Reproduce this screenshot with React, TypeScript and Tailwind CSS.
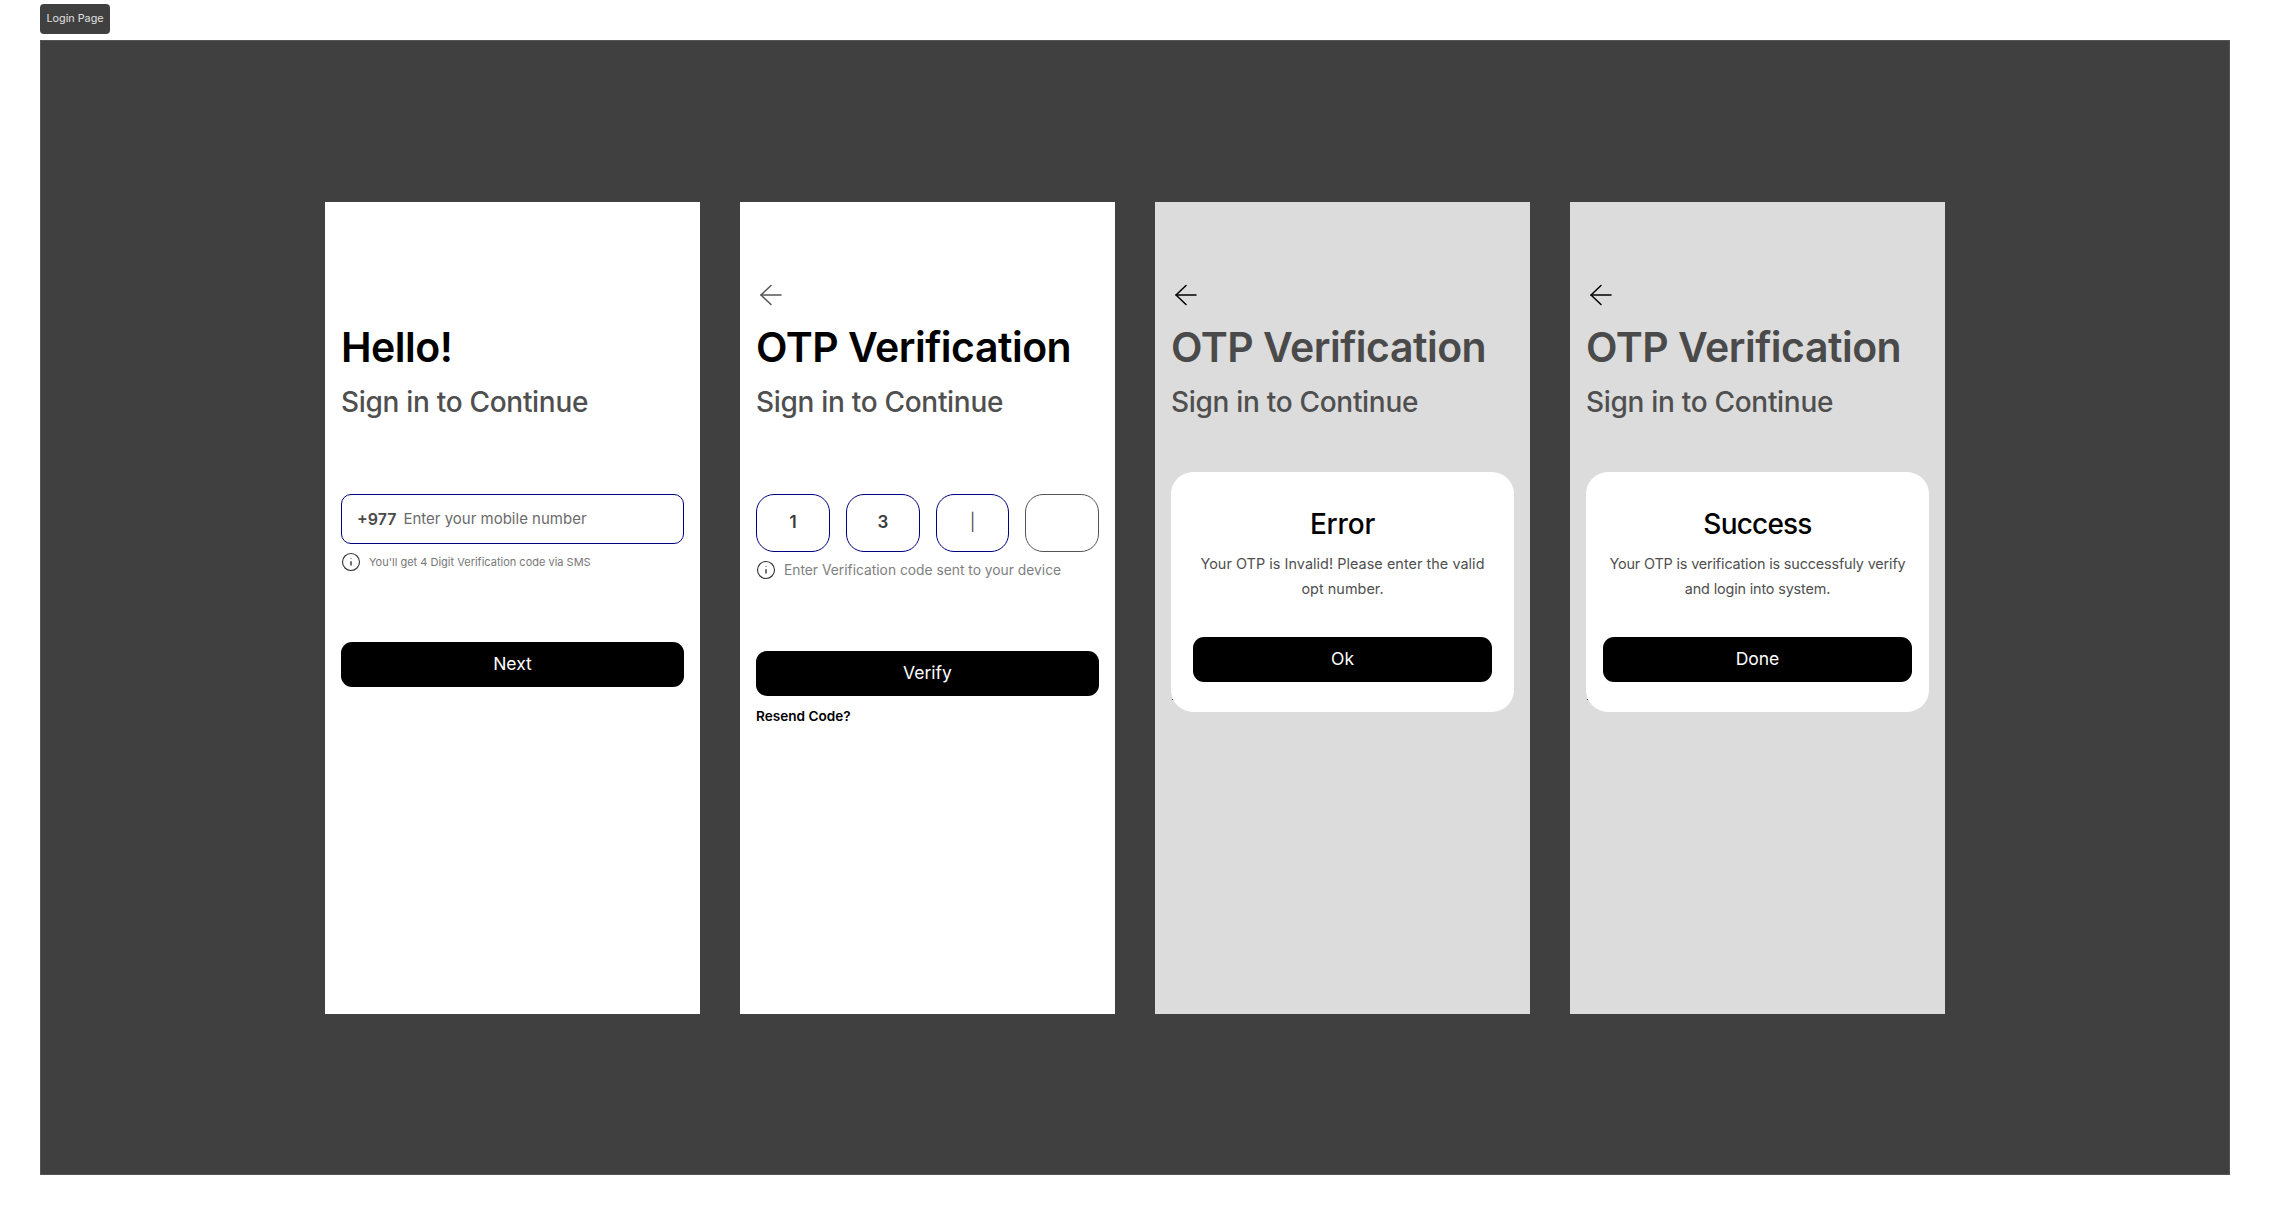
const font = "font-['Inter',sans-serif]";

function Arrow({ className }: { className: string }) {
  return (
    <svg width="24" height="24" viewBox="0 0 24 24" fill="none" stroke="currentColor" strokeWidth="1.5" strokeLinecap="round" strokeLinejoin="round" className={className}>
      <path d="M23 12H3" />
      <path d="M13 2.5L3 12l10 9.5" />
    </svg>
  );
}

function Info() {
  return (
    <svg width="20" height="20" viewBox="0 0 20 20" fill="none" stroke="#333333" className="shrink-0">
      <circle cx="10" cy="10" r="8.5" strokeWidth="1.1" />
      <path d="M10 9.2v4.2" strokeWidth="1.4" />
      <path d="M10 6.3v.5" strokeWidth="1.6" />
    </svg>
  );
}

function Button({ label }: { label: string }) {
  return (
    <button className="h-[45px] w-full rounded-[11px] bg-black text-[17.5px] font-normal text-white">
      {label}
    </button>
  );
}

function Header({ title, titleColor, arrowColor, showArrow = true }: { title: string; titleColor: string; arrowColor: string; showArrow?: boolean }) {
  return (
    <div className="flex flex-col">
      <div className="h-[24px]">{showArrow && <Arrow className={`ml-[2px] ${arrowColor}`} />}</div>
      <h1 className={`mt-[15px] h-[50px] text-[41px] leading-[50px] font-semibold tracking-[-0.5px] whitespace-nowrap ${titleColor}`}>{title}</h1>
      <p className="mt-[11px] h-[38px] text-[28px] leading-[38px] font-medium tracking-[-0.3px] text-[#4f4f4f] whitespace-nowrap">Sign in to Continue</p>
    </div>
  );
}

function OtpBox({ value, active, w = "w-[74px]", thin = false }: { value?: string; active: boolean; w?: string; thin?: boolean }) {
  return (
    <div className={`flex h-[58px] ${w} items-center justify-center rounded-[18px] border text-[17px] ${thin ? "font-normal text-[#555555]" : "font-semibold text-[#3a3a3a]"} ${active ? "border-[#000080]" : "border-[#555555]"}`}>
      {value}
    </div>
  );
}

function Modal({ title, lines, action, px, titleTracking, bodyTracking }: { title: string; lines: string[]; action: string; px: string; titleTracking: string; bodyTracking: string }) {
  return (
    <div className={`relative mt-[51px] flex h-[240px] flex-col items-center rounded-[22px] bg-white pt-[35px] ${px}`}>
      <h2 className={`h-[34px] text-[28px] leading-[34px] font-medium text-black ${titleTracking}`}>{title}</h2>
      <p className={`mt-[10px] text-center text-[14.4px] leading-[25px] text-[#4f4f4f] whitespace-nowrap ${bodyTracking}`}>
        {lines[0]}
        <br />
        {lines[1]}
      </p>
      <div className="mt-[36px] w-full">
        <Button label={action} />
      </div>
      <span className="absolute bottom-[12px] left-[1px] h-px w-px bg-[#444444]" />
    </div>
  );
}

export default function App() {
  return (
    <div className={`min-h-[1215px] bg-white pt-[4px] pl-[40px] ${font}`}>
      <div className="flex h-[30px] w-[70px] items-center justify-center rounded-[4px] bg-[#404040] text-[10.8px] text-[#e0e0e0]">Login Page</div>
      <div className="mt-[6px] flex h-[1135px] w-[2190px] gap-[40px] border border-[#555555] bg-[#404040] pt-[161px] pl-[284px]">
        <section className="h-[812px] w-[375px] bg-white px-[16px] pt-[81px]">
          <Header title="Hello!" titleColor="text-black" arrowColor="text-black" showArrow={false} />
          <div className="mt-[73px] flex h-[50px] items-center rounded-[10px] border border-[#000080] px-[15px] text-[15px] text-[#6b6b6b]">
            <span className="mr-[7px] text-[16px] font-semibold text-[#4a4a4a]">+977</span>
            Enter your mobile number
          </div>
          <div className="mt-[8px] flex items-center gap-[8px] text-[11px] text-[#777777]">
            <Info />
            You'll get 4 Digit Verification code via SMS
          </div>
          <div className="mt-[70px]">
            <Button label="Next" />
          </div>
        </section>

        <section className="h-[812px] w-[375px] bg-white px-[16px] pt-[81px]">
          <Header title="OTP Verification" titleColor="text-black" arrowColor="text-[#555555]" />
          <div className="mt-[73px] flex justify-between">
            <OtpBox value="1" active />
            <OtpBox value="3" active />
            <OtpBox value="|" active w="w-[73px]" thin />
            <OtpBox active={false} />
          </div>
          <div className="mt-[8px] flex items-center gap-[8px] text-[13.8px] text-[#808080]">
            <Info />
            Enter Verification code sent to your device
          </div>
          <div className="mt-[70px]">
            <Button label="Verify" />
          </div>
          <p className="mt-[10px] text-[13.6px] font-semibold text-black">Resend Code?</p>
        </section>

        <section className="h-[812px] w-[375px] bg-[#dcdcdc] px-[16px] pt-[81px]">
          <Header title="OTP Verification" titleColor="text-[#4a4a4a]" arrowColor="text-black" />
          <Modal title="Error" lines={["Your OTP is Invalid! Please enter the valid", "opt number."]} action="Ok" px="px-[22px]" titleTracking="tracking-[-0.2px]" bodyTracking="tracking-[0.05px]" />
        </section>

        <section className="h-[812px] w-[375px] bg-[#dcdcdc] px-[16px] pt-[81px]">
          <Header title="OTP Verification" titleColor="text-[#4a4a4a]" arrowColor="text-black" />
          <Modal title="Success" lines={["Your OTP is verification is successfuly verify", "and login into system."]} action="Done" px="px-[17px]" titleTracking="tracking-[-0.8px]" bodyTracking="tracking-[-0.15px]" />
        </section>
      </div>
    </div>
  );
}
